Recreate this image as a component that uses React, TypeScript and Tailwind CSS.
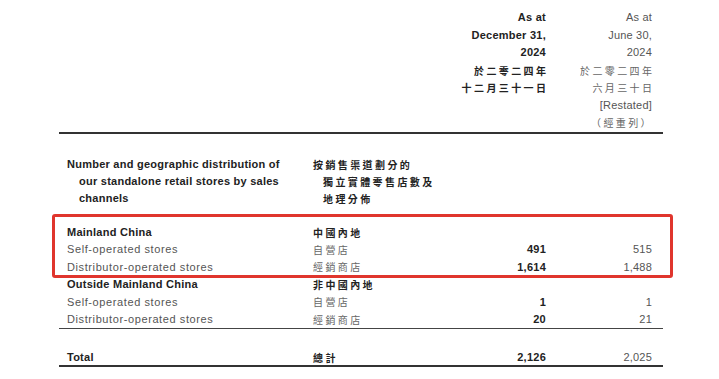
const latin = "font-['Liberation_Sans','Noto_Sans_CJK_TC',sans-serif]";
const cjk = "font-['Noto_Sans_CJK_TC','Liberation_Sans',sans-serif] text-[10px] tracking-[2.4px]";
const boldText = `text-[11px] font-bold tracking-[0.25px] text-[#222] ${latin}`;
const labelText = `text-[11px] tracking-[0.6px] text-[#555] ${latin}`;
const numText = `text-[11px] tracking-[0.2px] text-[#555] ${latin}`;

type Row = {
  en: string;
  zh: string;
  cur?: string;
  prev?: string;
  heading?: boolean;
};

const mainland: Row[] = [
  { en: "Mainland China", zh: "中國內地", heading: true },
  { en: "Self-operated stores", zh: "自營店", cur: "491", prev: "515" },
  { en: "Distributor-operated stores", zh: "經銷商店", cur: "1,614", prev: "1,488" },
];

const outside: Row[] = [
  { en: "Outside Mainland China", zh: "非中國內地", heading: true },
  { en: "Self-operated stores", zh: "自營店", cur: "1", prev: "1" },
  { en: "Distributor-operated stores", zh: "經銷商店", cur: "20", prev: "21" },
];

const grid = "grid grid-cols-[254px_127px_106px_106px] pr-[11px]";

function DataRow({ row }: { row: Row }) {
  return (
    <div className={`${grid} h-[17.4px] items-center`}>
      <div className={`pl-2 ${row.heading ? boldText : labelText}`}>{row.en}</div>
      <div className={`${cjk} ${row.heading ? "font-bold text-[#222]" : "text-[#666]"}`}>
        {row.zh}
      </div>
      <div className={`text-right ${boldText}`}>{row.cur}</div>
      <div className={`text-right ${numText}`}>{row.prev}</div>
    </div>
  );
}

export default function App() {
  return (
    <div className="w-[719px] h-[379px] bg-white overflow-hidden">
      <div className="ml-[59px] w-[604px]">
        {/* header */}
        <div className={`${grid} pt-[9px] border-b-2 border-[#333] leading-[17.5px]`}>
          <div />
          <div />
          <div className="text-right text-[#222]">
            <div className={boldText}>As at</div>
            <div className={boldText}>December 31,</div>
            <div className={boldText}>2024</div>
            <div className={`${cjk} font-bold -mr-[2.4px]`}>於二零二四年</div>
            <div className={`${cjk} font-bold -mr-[2.4px]`}>十二月三十一日</div>
          </div>
          <div className="text-right text-[#666]">
            <div className={numText}>As at</div>
            <div className={numText}>June 30,</div>
            <div className={numText}>2024</div>
            <div className={`${cjk} -mr-[2.4px]`}>於二零二四年</div>
            <div className={`${cjk} -mr-[2.4px]`}>六月三十日</div>
            <div className={numText}>[Restated]</div>
            <div className={`${cjk} -mr-[1px]`}>（經重列）</div>
          </div>
        </div>

        {/* section title */}
        <div className={`${grid} mt-[22px] leading-[17px]`}>
          <div className={`pl-2 ${boldText}`}>
            <div>Number and geographic distribution of</div>
            <div className="pl-3">our standalone retail stores by sales</div>
            <div className="pl-3">channels</div>
          </div>
          <div className={`${cjk} font-bold text-[#222]`}>
            <div>按銷售渠道劃分的</div>
            <div className="pl-[10px]">獨立實體零售店數及</div>
            <div className="pl-[10px]">地理分佈</div>
          </div>
          <div />
          <div />
        </div>

        {/* rows */}
        <div className="mt-[17px] border-b border-[#444]">
          <div className="relative">
            {mainland.map((r, i) => (
              <DataRow key={i} row={r} />
            ))}
            <div className="pointer-events-none absolute -top-[10px] -left-[7px] -right-[10px] -bottom-[2px] rounded-[3px] border-[3px] border-[#e0352d]" />
          </div>
          {outside.map((r, i) => (
            <DataRow key={i} row={r} />
          ))}
        </div>

        {/* total */}
        <div className={`${grid} mt-[20px] h-[18px] items-center border-b-2 border-[#333]`}>
          <div className={`pl-2 ${boldText}`}>Total</div>
          <div className={`${cjk} font-bold text-[#222]`}>總計</div>
          <div className={`text-right ${boldText}`}>2,126</div>
          <div className={`text-right ${numText}`}>2,025</div>
        </div>
      </div>
    </div>
  );
}
